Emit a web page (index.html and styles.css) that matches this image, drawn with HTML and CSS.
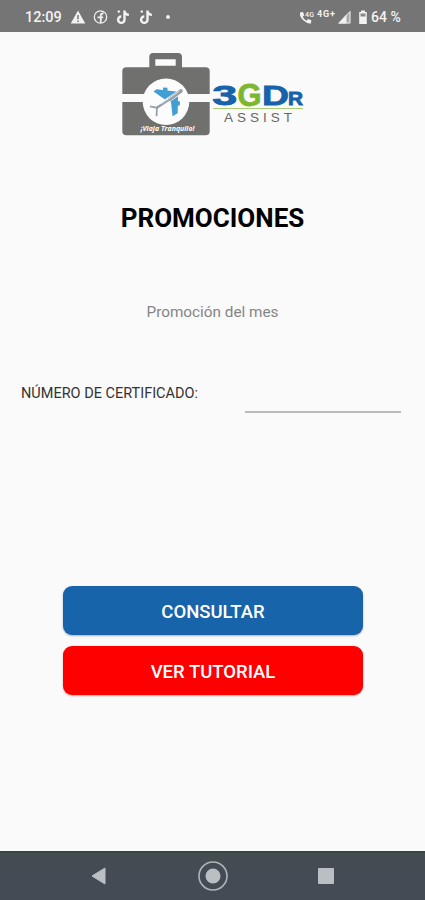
FILE: index.html
```html
<!DOCTYPE html>
<html lang="es">
<head>
  <meta charset="UTF-8" />
  <meta name="viewport" content="width=device-width, initial-scale=1" />
  <title>3GDr Assist - Promociones</title>
  <link rel="stylesheet" href="styles.css">
</head>
<body>
  <header class="status-bar">
    <span class="clock">12:09</span>
    <svg class="notifications" width="104" height="16" viewBox="0 0 104 16">
      <!-- alerta -->
      <path fill="#f2f2f2" d="M8 1.5L15.3 14.5H.7z" />
      <path stroke="#757575" stroke-width="1.5" d="M8 6v4.3M8 11.4v1.5" />
      <!-- facebook -->
      <circle cx="30.5" cy="8" r="6.2" fill="none" stroke="#eee" stroke-width="1.3" />
      <path fill="none" stroke="#eee" stroke-width="1.8" d="M33.5 4.5h-1q-1.7 0-1.7 2V14M27.5 8.3h5.6" />
      <!-- tiktok -->
      <g id="tiktok" fill="none" stroke="#f2f2f2" stroke-width="2.4">
        <path d="M54.5 1.5v9.2a3.2 3.2 0 1 1-3.2-3.2M54.5 2.500q.8 3.300 4.400 3.400" />
        <path stroke-width="1.2" d="M47.500 2.500h2.600M48.800 1.300v2.600" />
      </g>
      <use href="#tiktok" x="23" />
      <circle cx="98" cy="8" r="2" fill="#eee" />
    </svg>
    <svg class="signal" width="72" height="16" viewBox="0 0 72 16">
      <!-- llamada -->
      <path fill="#f2f2f2" d="M1 3.500l3-.6 1.200 3.300-1.500 1.600q1.200 2.500 3.700 3.900L9.100 10l3.200 1.300-.3 3.100Q8.200 15 4.300 11.300T1 3.500z" />
      <text class="tiny" x="6" y="7.5" textLength="9">4G</text>
      <text class="network" x="18" y="8" textLength="18">4G+</text>
      <path fill="#aaa" d="M51.5 1.5v13H39z" />
      <path fill="#f2f2f2" d="M47.5 5.6v8.9H39z" />
      <path fill="none" stroke="#e8e8e8" d="M51 2.6V14H40z" />
      <!-- bateria -->
      <path fill="#f2f2f2" d="M62 1.5h4V3h1.8v12h-7.6V3H62z" />
      <path fill="#8a8a8a" d="M61.5 4.5h5v3h-5z" />
    </svg>
    <span class="battery">64 %</span>
  </header>

  <main class="screen">
    <svg class="logo" width="185" height="90" viewBox="0 0 185 90">
      <g fill="#70706e">
        <path fill-rule="evenodd" d="M29.3 18V7a4 4 0 0 1 4-4H58a4 4 0 0 1 4 4v11zM35.3 15.7h20.4V9.3H35.3z" />
        <path d="M2.3 44V21.3a4 4 0 0 1 4-4h79.4a4 4 0 0 1 4 4V44z" />
        <path d="M2.3 52h87.4v29.3a4 4 0 0 1-4 4H6.3a4 4 0 0 1-4-4z" />
      </g>
      <circle cx="46" cy="51.7" r="23.3" fill="#fcfcfc" />
      <!-- avion -->
      <path fill="#419fd4" d="M33.5 41.500L36.500 39.300 56 41.500 58 46 57.700 63.300 52.500 66.300 51 52 45 49.500z" />
      <path fill="#419fd4" d="M43 37.500l4.500.3v3.500l-4.500-.5zM57 51l3 .5-.3 4-2.700.5z" />
      <path fill="none" stroke="#fcfcfc" stroke-width="5" stroke-linecap="round" d="M60 42L37 57.800" />
      <path fill="none" stroke="#9a9fa6" stroke-width="3.600" stroke-linecap="round" d="M61 41L50 49" />
      <path fill="none" stroke="#9a9fa6" stroke-width="2.400" d="M51 48.200L36.500 58" />
      <path fill="none" stroke="#9a9fa6" stroke-width="1.800" d="M30 56.300l7 1.500-.5 8.500" />
      <path stroke="#d0e4f0" stroke-width="1" d="M41 54l18-12.500" />
      <text class="slogan" x="20.5" y="80.5" textLength="54" lengthAdjust="spacingAndGlyphs">¡Viaja Tranquilo!</text>
      <g class="brand">
        <text x="92.3" y="55.3" font-size="28" textLength="25" lengthAdjust="spacingAndGlyphs">3</text>
        <text class="green" x="117.5" y="56" font-size="31" textLength="24" lengthAdjust="spacingAndGlyphs">G</text>
        <text x="142" y="55.3" font-size="28" textLength="27" lengthAdjust="spacingAndGlyphs">D</text>
        <text x="168" y="55.3" font-size="17.5" textLength="15" lengthAdjust="spacingAndGlyphs">R</text>
      </g>
      <path stroke="#a9cf72" d="M93 58.5h90" />
      <text class="assist" x="104" y="71.6">ASSIST</text>
    </svg>

    <h1>PROMOCIONES</h1>
    <p class="subtitle">Promoción del mes</p>

    <form id="promoForm">
      <div class="field">
        <label for="certificado">NÚMERO DE CERTIFICADO:</label>
        <input type="text" id="certificado" />
      </div>
      <button type="submit" class="btn-consultar">CONSULTAR</button>
      <button type="button" class="btn-tutorial">VER TUTORIAL</button>
    </form>
  </main>

  <nav class="nav-bar">
    <svg width="30" height="30" viewBox="0 0 30 30">
      <path fill="#b9bfc2" stroke="#b9bfc2" stroke-linejoin="round" d="M8 15l13-8v16z" />
    </svg>
    <svg width="30" height="30" viewBox="0 0 30 30">
      <circle cx="15" cy="15" r="14" fill="none" stroke="#aeb5b7" stroke-width="1.6" />
      <circle cx="15" cy="15" r="7.5" fill="#b9bfc2" />
    </svg>
    <svg width="30" height="30" viewBox="0 0 30 30">
      <rect x="7" y="7" width="16" height="16" rx="1" fill="#b9bfc2" />
    </svg>
  </nav>
</body>
</html>
```

FILE: styles.css
```css
* {
  box-sizing: border-box;
}

body {
  margin: 0;
  height: 900px;
  display: flex;
  flex-direction: column;
  background: #fafafa;
  font-family: Roboto, sans-serif;
  color: #000;
}

.status-bar {
  height: 32px;
  flex: none;
  display: flex;
  align-items: center;
  padding: 1px 23px 0 25px;
  background: #757575;
  color: #f2f2f2;
  font-size: 14.5px;
  font-weight: 500;
}

.clock {
  width: 36px;
  padding-top: 1px;
  white-space: nowrap;
}

.notifications {
  margin-left: 9px;
}

.signal {
  margin-left: auto;
}

.battery {
  width: 31px;
  font-size: 14px;
  white-space: nowrap;
}

.tiny {
  font-size: 7px;
  fill: #f2f2f2;
}

.network {
  font-size: 9px;
  font-weight: 700;
  fill: #f2f2f2;
}

.screen {
  flex: 1;
  display: flex;
  flex-direction: column;
  align-items: center;
  padding-top: 18px;
}

.slogan {
  font: italic 700 7px "Open Sans", sans-serif;
  fill: #fff;
}

.brand {
  font-family: "Liberation Sans", sans-serif;
  font-weight: 700;
  fill: #1762ab;
  stroke: #1762ab;
  stroke-width: 0.8px;
}

.brand .green {
  fill: #7db72f;
  stroke: #7db72f;
}

.assist {
  font-family: "Liberation Sans", sans-serif;
  font-size: 13.5px;
  letter-spacing: 4px;
  fill: #666;
}

h1 {
  margin: 63px 0 0;
  font-size: 26px;
  line-height: 30px;
  font-weight: 700;
}

.subtitle {
  margin: 69px 0 0;
  font-size: 15.3px;
  line-height: 20px;
  color: #858585;
}

form {
  width: 100%;
  display: flex;
  flex-direction: column;
  align-items: center;
}

.field {
  width: 100%;
  height: 42px;
  margin: 49px 0 173px;
  padding: 0 24px 0 21px;
  display: flex;
  justify-content: space-between;
}

label {
  padding-top: 13px;
  font-size: 14.5px;
  line-height: 20px;
  color: #333;
}

input[type=text] {
  width: 156px;
  padding: 0;
  border: none;
  border-bottom: 2px solid #bababa;
  background: none;
  font-size: 16px;
}

button {
  width: 300px;
  height: 49px;
  padding: 2px 0 0 1px;
  border: none;
  border-radius: 9px;
  color: #fff;
  font-family: Roboto, sans-serif;
  font-size: 18.5px;
  font-weight: 500;
  box-shadow: 0 1px 2px rgba(0, 0, 0, 0.3);
}

.btn-consultar {
  margin-bottom: 11px;
  background: #1764aa;
}

.btn-tutorial {
  background: #f00;
}

.nav-bar {
  height: 49px;
  flex: none;
  display: flex;
  align-items: center;
  justify-content: space-between;
  padding: 0 84px 2px;
  border-top: 2px solid #374547;
  background: linear-gradient(#434e50, #454b54 40%);
}
```
